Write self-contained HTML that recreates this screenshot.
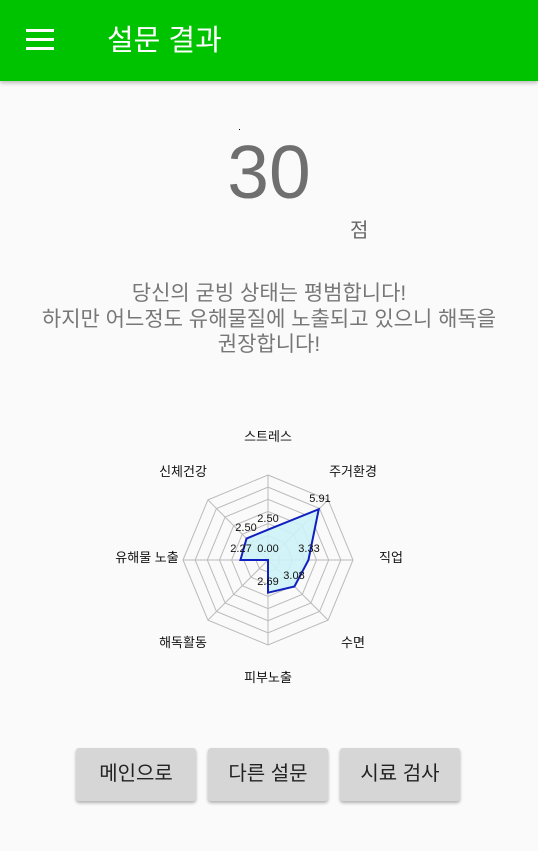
<!DOCTYPE html>
<html><head><meta charset="utf-8"><style>
body{margin:0;width:538px;height:851px;background:#fafafa;font-family:"Liberation Sans","Noto Sans CJK KR",sans-serif;position:relative;overflow:hidden}
.hdr{position:absolute;left:0;top:0;width:538px;height:81px;background:#00c300;box-shadow:0 2px 4px rgba(0,0,0,.25)}
.hdr .t{position:absolute;left:107px;top:21px;color:#fff;font-size:29px;line-height:40px}
.bar{position:absolute;left:26px;width:28px;height:3px;background:#fff}
.n{position:absolute;left:0;width:538px;text-align:center;top:127px;font-size:75px;line-height:90px;color:#6f6f6f}
.j{position:absolute;left:350px;top:214px;font-size:20px;color:#666}
.msg{position:absolute;left:0;width:538px;top:281px;text-align:center;font-size:21px;line-height:25.5px;color:#777}
.b{position:absolute;top:748px;width:120px;height:53px;background:#d6d6d6;border-radius:3px;box-shadow:0 2px 3px rgba(0,0,0,.3);text-align:center;line-height:53px;font-size:20px;color:#222}
svg{position:absolute;left:0;top:0}
</style></head><body>
<div class="hdr"><div class="bar" style="top:29px"></div><div class="bar" style="top:38px"></div><div class="bar" style="top:47px"></div><div class="t">설문 결과</div></div>
<div style="position:absolute;left:239px;top:129px;width:1px;height:1px;background:#000"></div>
<div class="n">30</div>
<div class="j">점</div>
<div class="msg">당신의 굳빙 상태는 평범합니다!<br>하지만 어느정도 유해물질에 노출되고 있으니 해독을<br>권장합니다!</div>
<svg id="s" width="538" height="851" font-family="Liberation Sans, Noto Sans CJK KR, sans-serif"></svg>
<div class="b" style="left:76px">메인으로</div>
<div class="b" style="left:208px">다른 설문</div>
<div class="b" style="left:340px">시료 검사</div>
<script>
var cx=268,cy=560,u=85/7,h='';
function p(r,i){var a=-Math.PI/2+i*Math.PI/4;return [cx+r*Math.cos(a),cy+r*Math.sin(a)];}
for(var k=1;k<=7;k++){var pts=[];for(var i=0;i<8;i++)pts.push(p(k*u,i).join(','));h+='<polygon points="'+pts.join(' ')+'" fill="none" stroke="#bbb" stroke-width="1"/>';}
for(var i=0;i<8;i++){var q=p(7*u,i);h+='<line x1="'+cx+'" y1="'+cy+'" x2="'+q[0]+'" y2="'+q[1]+'" stroke="#bbb"/>';}
var v=[2.5,5.91,3.33,3.08,2.69,0,2.27,2.5],pts=[];
for(var i=0;i<8;i++)pts.push(p(v[i]*u,i).join(','));
h+='<polygon points="'+pts.join(' ')+'" fill="#cdf3f7" fill-opacity=".9" stroke="#1020c0" stroke-width="2"/>';
var L=[['스트레스',268,441],['주거환경',353,476],['직업',391,562],['수면',353,647],['피부노출',268,682],['해독활동',183,647],['유해물 노출',147,562],['신체건강',183,476]];
L.forEach(function(l){h+='<text x="'+l[1]+'" y="'+l[2]+'" font-size="13" text-anchor="middle" fill="#111">'+l[0]+'</text>';});
var V=[['5.91',320,502],['2.50',268,522],['2.50',246,531],['2.27',241,552],['0.00',268,552],['3.33',309,552],['3.08',294,579],['2.69',268,585]];
V.forEach(function(l){h+='<text x="'+l[1]+'" y="'+l[2]+'" font-size="11" text-anchor="middle" fill="#111">'+l[0]+'</text>';});
document.getElementById('s').innerHTML=h;
</script>
</body></html>
